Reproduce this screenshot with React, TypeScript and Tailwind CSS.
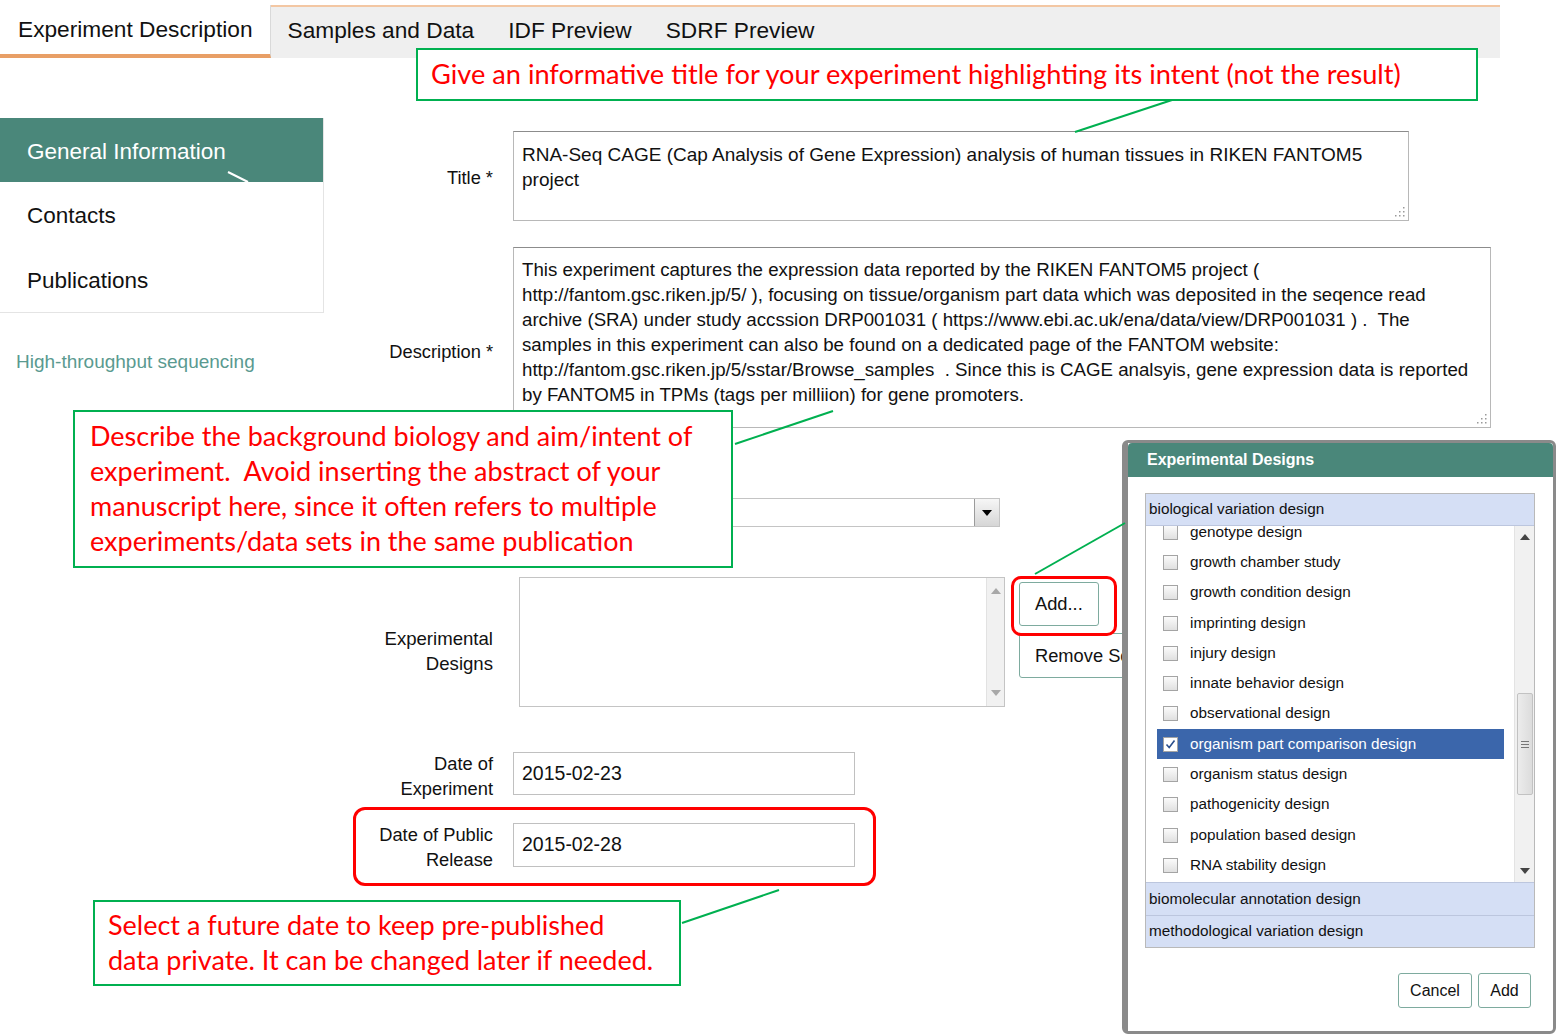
import React from 'react';

const designs = [
    'genotype design',
    'growth chamber study',
    'growth condition design',
    'imprinting design',
    'injury design',
    'innate behavior design',
    'observational design',
    'organism part comparison design',
    'organism status design',
    'pathogenicity design',
    'population based design',
    'RNA stability design',
];

// little dotted resize grip in the corner of a textarea
const Grip = () => (
    <svg width="11" height="11" viewBox="0 0 11 11" className="absolute right-[3px] bottom-[3px]">
        {[[9, 1], [9, 5], [5, 5], [9, 9], [5, 9], [1, 9]].map(([x, y], i) => (
            <rect key={i} x={x} y={y} width="1.5" height="1.5" fill="#9a9a9a" />
        ))}
    </svg>
);

const Arrow = ({ up, color }: { up?: boolean; color: string }) => (
    <svg width="10" height="6" viewBox="0 0 10 6">
        <path d={up ? 'M0 6 L5 0 L10 6 Z' : 'M0 0 L10 0 L5 6 Z'} fill={color} />
    </svg>
);

const Checkbox = ({ checked }: { checked?: boolean }) => (
    <span
        className={`shrink-0 w-[15px] h-[15px] border border-[#a4a4a4] flex items-center justify-center ${
            checked ? 'bg-white' : 'bg-linear-to-b from-[#fbfbfb] to-[#e0e0e0]'
        }`}
    >
        {checked && (
            <svg width="11" height="11" viewBox="0 0 11 11">
                <path d="M1.5 5.5 L4.2 8.6 L9.5 1.5" stroke="#2b4f8c" strokeWidth="1.6" fill="none" />
            </svg>
        )}
    </span>
);

const Callout = ({ className, children }: { className: string; children: React.ReactNode }) => (
    <div
        className={`absolute bg-white border-2 border-[#00b050] text-[#ff0000] font-['Lato','Carlito',sans-serif] ${className}`}
    >
        {children}
    </div>
);

export default function App() {
    return (
        <div className="relative w-[1556px] h-[1036px] overflow-hidden bg-white text-[#111] font-['Liberation_Sans',Arial,sans-serif]">
            {/* Tabs */}
            <div className="mt-[5px] w-[1500px] h-[53px] flex bg-[#efefef] border-t-2 border-[#f3c7a3]">
                <div className="-mt-[2px] h-[53px] pl-[18px] pr-[17px] bg-white border-r border-[#d9d9d9] border-b-4 border-b-[#e89f66] flex items-center text-[22.7px]">
                    Experiment Description
                </div>
                {['Samples and Data', 'IDF Preview', 'SDRF Preview'].map((t) => (
                    <div key={t} className="px-[17px] pb-[5px] flex items-center text-[22.7px]">
                        {t}
                    </div>
                ))}
            </div>

            <div className="flex items-start">
                {/* Sidebar */}
                <aside className="w-[324px] shrink-0 mt-[60px]">
                    <div className="border-r border-b border-[#e4e4e4]">
                        <div className="relative h-[64px] pt-[4px] pl-[27px] flex items-center bg-[#4a877a] text-white text-[22.5px]">
                            General Information
                        </div>
                        <div className="h-[65px] pt-[3px] pl-[27px] flex items-center text-[22.5px]">Contacts</div>
                        <div className="h-[65px] pt-[3px] pl-[27px] flex items-center text-[22.5px]">Publications</div>
                    </div>
                    <div className="mt-[35px] pl-[16px] text-[19px] text-[#5a9a90]">High-throughput sequencing</div>
                </aside>

                {/* Form */}
                <div className="mt-[73px] text-[18.3px]">
                    <div className="flex items-center">
                        <div className="w-[169px] text-right pt-[4px]">Title *</div>
                        <div className="relative ml-[20px] w-[896px] h-[90px] border border-[#b8b8b8] border-t-[#8c8c8c] px-[8px] pt-[10px] leading-[25px] text-[19px]">
                            RNA-Seq CAGE (Cap Analysis of Gene Expression) analysis of human tissues in RIKEN FANTOM5
                            <br />
                            project
                            <Grip />
                        </div>
                    </div>

                    <div className="flex items-center mt-[26px]">
                        <div className="w-[169px] text-right pt-[29px]">Description *</div>
                        <div className="relative ml-[20px] w-[978px] h-[181px] border border-[#b8b8b8] border-t-[#8c8c8c] px-[8px] pt-[9px] leading-[25px] text-[18.7px] whitespace-pre">
                            {'This experiment captures the expression data reported by the RIKEN FANTOM5 project (\n' +
                                'http://fantom.gsc.riken.jp/5/ ), focusing on tissue/organism part data which was deposited in the seqence read\n' +
                                'archive (SRA) under study accssion DRP001031 ( https://www.ebi.ac.uk/ena/data/view/DRP001031 ) .  The\n' +
                                'samples in this experiment can also be found on a dedicated page of the FANTOM website:\n' +
                                'http://fantom.gsc.riken.jp/5/sstar/Browse_samples  . Since this is CAGE analsyis, gene expression data is reported\n' +
                                'by FANTOM5 in TPMs (tags per milliion) for gene promoters.'}
                            <Grip />
                        </div>
                    </div>

                    {/* Experiment type select (its label sits under the callout) */}
                    <div className="flex items-center mt-[70px]">
                        <div className="w-[169px]" />
                        <div className="ml-[20px] w-[487px] h-[29px] border border-[#c4c4c4] flex justify-end">
                            <div className="w-[25px] h-full border-l border-[#9b9b9b] bg-linear-to-b from-[#f6f6f6] to-[#d6d6d6] flex items-center justify-center">
                                <Arrow color="#000" />
                            </div>
                        </div>
                    </div>

                    <div className="flex items-center mt-[50px]">
                        <div className="w-[169px] text-right leading-[25px] pt-[17px] text-[18.6px]">
                            Experimental
                            <br />
                            Designs
                        </div>
                        <div className="ml-[26px] w-[486px] h-[130px] border border-[#c4c4c4] flex justify-end">
                            <div className="w-[18px] h-full bg-[#f1f1f1] border-l border-[#e2e2e2] flex flex-col items-center justify-between py-[10px]">
                                <Arrow up color="#a8a8a8" />
                                <Arrow color="#a8a8a8" />
                            </div>
                        </div>
                        <div className="self-start ml-[14px] mt-[5px] flex flex-col">
                            <div className="relative w-[80px] h-[44px] border border-[#7eab9f] rounded-[3px] pl-[15px] flex items-center">
                                Add...
                                <div className="absolute -left-[9px] -top-[7px] w-[106px] h-[60px] border-[3px] border-[#ff0000] rounded-[10px]" />
                            </div>
                            <div className="mt-[7px] w-[170px] h-[45px] border border-[#7eab9f] rounded-[3px] pl-[15px] flex items-center">
                                Remove Selected
                            </div>
                        </div>
                    </div>

                    <div className="flex items-start mt-[45px]">
                        <div className="w-[169px] -mt-[1.5px] text-right leading-[25px]">
                            Date of
                            <br />
                            Experiment
                        </div>
                        <div className="ml-[20px] w-[342px] h-[43px] border border-[#c0c0c0] pl-[8px] flex items-center text-[19.5px]">
                            2015-02-23
                        </div>
                    </div>

                    <div className="relative flex items-start mt-[22.5px]">
                        <div className="w-[169px] -mt-[1.5px] text-right leading-[25px]">
                            Date of Public
                            <br />
                            Release
                        </div>
                        <div className="ml-[20px] w-[342px] h-[44px] border border-[#c0c0c0] pl-[8px] flex items-center text-[19.5px]">
                            2015-02-28
                        </div>
                        <div className="absolute left-[29px] -top-[16px] w-[523px] h-[79px] border-[3px] border-[#ff0000] rounded-[12px]" />
                    </div>
                </div>
            </div>

            {/* Annotation callouts */}
            <Callout className="left-[416px] top-[48px] w-[1062px] h-[53px] pl-[13px] flex items-center text-[27.2px]">
                Give an informative title for your experiment highlighting its intent (not the result)
            </Callout>
            <Callout className="left-[73px] top-[410px] w-[660px] h-[158px] pl-[15px] pt-[6px] text-[27px] leading-[35px]">
                Describe the background biology and aim/intent of
                <br />
                experiment.&nbsp; Avoid inserting the abstract of your
                <br />
                manuscript here, since it often refers to multiple
                <br />
                experiments/data sets in the same publication
            </Callout>
            <Callout className="left-[93px] top-[900px] w-[588px] h-[86px] pl-[13px] pt-[5px] text-[27px] leading-[35px]">
                Select a future date to keep pre-published
                <br />
                data private. It can be changed later if needed.
            </Callout>

            {/* Experimental Designs dialog */}
            <div className="absolute left-[1122px] top-[440px] w-[434px] h-[594px] bg-white rounded-[6px] border-[#8a8a8a] border-l-[6px] border-t-[3px] border-r-[3px] border-b-[3px] text-[15.3px]">
                <div className="h-[34px] bg-[#4a877a] rounded-t-[4px] pl-[19px] flex items-center text-white font-bold text-[16px]">
                    Experimental Designs
                </div>
                <div className="pl-[17px] pr-[18px] pt-[16px]">
                    <div className="border border-[#b9b9b9]">
                        <div className="h-[32px] pl-[3px] flex items-center bg-[#d5dff5] border-b border-[#bcc6de]">
                            biological variation design
                        </div>
                        <div className="h-[356px] flex overflow-hidden">
                            <div className="flex-1 pl-[11px] pr-[10px]">
                                <div className="-mt-[9px]">
                                    {designs.map((d) => {
                                        const sel = d === 'organism part comparison design';
                                        return (
                                            <div
                                                key={d}
                                                className={`h-[30.3px] pl-[6px] flex items-center ${sel ? 'bg-[#3b66ab] text-white' : ''}`}
                                            >
                                                <Checkbox checked={sel} />
                                                <span className="ml-[12px]">{d}</span>
                                            </div>
                                        );
                                    })}
                                </div>
                            </div>
                            <div className="relative w-[20px] bg-[#f1f1f1] border-l border-[#e3e3e3] flex flex-col items-center justify-between py-[8px]">
                                <Arrow up color="#444" />
                                <div className="absolute left-[2px] top-[167px] w-[16px] h-[102px] rounded-[2px] border border-[#c2c2c2] bg-linear-to-r from-[#ececec] to-[#dcdcdc] flex flex-col items-center justify-center gap-[2px]">
                                    <span className="w-[8px] h-px bg-[#777]" />
                                    <span className="w-[8px] h-px bg-[#777]" />
                                    <span className="w-[8px] h-px bg-[#777]" />
                                </div>
                                <Arrow color="#444" />
                            </div>
                        </div>
                        <div className="h-[33px] pl-[3px] flex items-center bg-[#d5dff5] border-t border-[#bcc6de]">
                            biomolecular annotation design
                        </div>
                        <div className="h-[32px] pl-[3px] flex items-center bg-[#d5dff5] border-t border-[#bcc6de]">
                            methodological variation design
                        </div>
                    </div>
                    <div className="mt-[25px] pr-[4px] flex justify-end gap-[6px] text-[16px]">
                        <div className="w-[74px] h-[35px] border border-[#7eab9f] rounded-[3px] flex items-center justify-center">Cancel</div>
                        <div className="w-[53px] h-[35px] border border-[#7eab9f] rounded-[3px] flex items-center justify-center">Add</div>
                    </div>
                </div>
            </div>

            {/* connector lines */}
            <svg className="absolute inset-0 pointer-events-none" width="1556" height="1036">
                <line x1="1172" y1="100" x2="1075" y2="132" stroke="#00b050" strokeWidth="2" />
                <line x1="735" y1="444" x2="833" y2="411" stroke="#00b050" strokeWidth="2" />
                <line x1="1035" y1="574" x2="1125" y2="523" stroke="#00b050" strokeWidth="2" />
                <line x1="682" y1="923" x2="779" y2="890" stroke="#00b050" strokeWidth="2" />
                <line x1="228" y1="172" x2="248" y2="182" stroke="#ffffff" strokeWidth="2" />
            </svg>
        </div>
    );
}
